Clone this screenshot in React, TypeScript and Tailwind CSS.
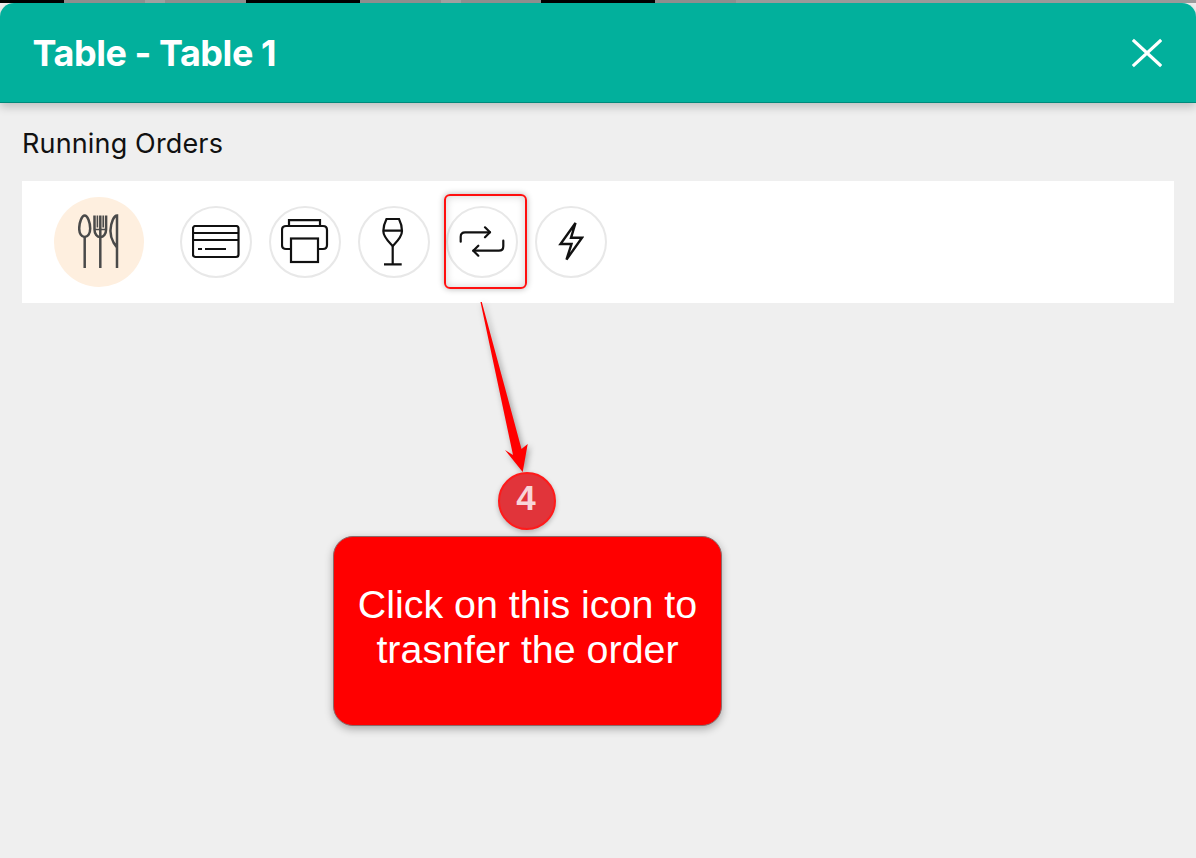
function IconCircle({ children }: { children: React.ReactNode }) {
  return (
    <div className="w-[72px] h-[72px] rounded-full border-2 border-[#e8e8e8] bg-white flex items-center justify-center shrink-0">
      {children}
    </div>
  );
}

function CutleryIcon() {
  return (
    <svg width="42" height="56" viewBox="0 0 42 56" fill="none" stroke="#4a4a4a" strokeWidth="2.500">
      <path d="M6.700 1.500c-2.800 0-5.500 7-5.500 13 0 5 2.300 8.500 5.500 8.500s5.500-3.500 5.500-8.500c0-6-2.700-13-5.500-13z" />
      <path d="M6.700 23v31" />
      <path d="M16.500 1.500v14c0 4.500 2.600 7.500 5.800 7.500s5.800-3 5.800-7.500v-14" />
      <path d="M22.300 1.500V54" />
      <path d="M19.400 1.500v12M25.200 1.500v12M16.500 15.500h11.600" strokeWidth="1.600" />
      <path d="M39 54V1.500c-3 0-6 6.500-6.500 14.500-.3 5 1 9 3 12.500l3.500 5" />
    </svg>
  );
}

function CardIcon() {
  return (
    <svg width="48" height="34" viewBox="0 0 48 34" fill="none" stroke="#111" strokeWidth="2.200">
      <rect x="1" y="1" width="45.500" height="31" rx="2.500" />
      <path d="M1 8h45.500M1 15h45.500M6 24h4M13 24h21" strokeWidth="1.800" />
    </svg>
  );
}

function PrinterIcon() {
  return (
    <svg width="48" height="46" viewBox="0 0 48 46" fill="none" stroke="#111" strokeWidth="2.200">
      <path d="M8 7V1.200h31V7" />
      <path d="M10 30H5c-2.500 0-4-1.500-4-4V11c0-2.500 1.500-4 4-4h37c2.500 0 4 1.500 4 4v15c0 2.500-1.500 4-4 4h-5" />
      <rect x="10" y="19.500" width="27" height="23.500" />
    </svg>
  );
}

function WineIcon() {
  return (
    <svg width="24" height="48" viewBox="0 0 24 48" fill="none" stroke="#111" strokeWidth="2.200">
      <path d="M4.500 1h12.500c2 4 3 8 3 12 0 6-5 10.500-9.300 15C6.500 23.500 1.300 19 1.300 13c0-4 1.200-8 3.200-12z" />
      <path d="M1.500 12.700h18.500M10.700 28v18.300M2 46.300h17.700" />
    </svg>
  );
}

function TransferIcon() {
  return (
    <svg width="46" height="32" viewBox="0 0 46 32" fill="none" stroke="#111" strokeWidth="2.200" strokeLinecap="round" strokeLinejoin="round">
      <path d="M1.700 15.700v-5c0-3 1.400-4.400 4.400-4.400H31" />
      <path d="M26 1.300l5 5-5 5" />
      <path d="M44.300 14.700v5.600c0 3-1.400 4.400-4.400 4.400H14.300" />
      <path d="M19.300 19.700l-5 5 5 5" />
    </svg>
  );
}

function BoltIcon() {
  return (
    <svg width="26" height="44" viewBox="0 0 26 44" fill="none" stroke="#111" strokeWidth="2.400" strokeLinejoin="miter">
      <path d="M17.500 3L2.500 24H13.500L8.500 39.500 24 17.800H13z" />
    </svg>
  );
}

// strip of the page showing above the modal: [width, colour class]
const stripParts: [string, string][] = [
  ['w-[64px]', 'bg-black'],
  ['w-[81px]', 'bg-[#8e8e8e]'],
  ['w-[20px]', 'bg-[#a0a0a0]'],
  ['w-[81px]', 'bg-[#8e8e8e]'],
  ['w-[114px]', 'bg-black'],
  ['w-[81px]', 'bg-[#8e8e8e]'],
  ['w-[20px]', 'bg-[#a0a0a0]'],
  ['w-[80px]', 'bg-[#8e8e8e]'],
  ['w-[114px]', 'bg-black'],
  ['w-[81px]', 'bg-[#8e8e8e]'],
  ['flex-1', 'bg-[#9a9a9a]'],
];

export default function App() {
  return (
    <div className="relative h-[858px] w-[1196px] overflow-hidden bg-[#efefef] font-['Inter','Liberation_Sans',sans-serif]">
      <div className="h-[3px] flex">
        {stripParts.map(([w, bg], i) => (
          <div key={i} className={`${w} ${bg}`} />
        ))}
      </div>

      <header className="h-[100px] bg-[#02b09c] rounded-t-[14px] border-b border-[#00897b] shadow-[0_4px_10px_rgba(0,0,0,0.2)] flex items-center justify-between pl-[32.5px] pr-[34px]">
        <h1 className="text-[36px] font-bold text-white tracking-[-0.45px]">Table - Table 1</h1>
        <svg width="30" height="30" viewBox="0 0 30 30" stroke="#fff" strokeWidth="3.200" strokeLinecap="square">
          <path d="M2 3l26 24M28 3L2 27" />
        </svg>
      </header>

      <div className="px-[22px]">
        <p className="pt-[25px] text-[27px] leading-[31px] tracking-[0.15px] text-[#111]">Running Orders</p>

        <div className="mt-[22px] h-[122px] bg-white flex items-center pl-[32px]">
          <div className="w-[90px] h-[90px] rounded-full bg-[#feefdf] flex items-center justify-center shrink-0">
            <CutleryIcon />
          </div>
          <div className="ml-[36.4px] flex items-center gap-[16.7px]">
            <IconCircle><CardIcon /></IconCircle>
            <IconCircle><PrinterIcon /></IconCircle>
            <IconCircle><WineIcon /></IconCircle>
            <IconCircle><TransferIcon /></IconCircle>
            <IconCircle><BoltIcon /></IconCircle>
          </div>
        </div>
      </div>

      {/* tutorial overlay */}
      <div className="absolute left-[444px] top-[194px] w-[83px] h-[95px] rounded-[6px] border-2 border-[#ff0f0f] shadow-[0_0_6px_rgba(0,0,0,0.3),inset_0_0_8px_rgba(0,0,0,0.18)]" />

      <svg className="absolute left-[470px] top-[295px] drop-shadow-[2px_2px_3px_rgba(0,0,0,0.35)]" width="70" height="185" viewBox="0 0 70 185" fill="none">
        <polygon points="10.500,7 11.800,7 51.500,154 57.700,149 52.700,177 35,155 43,160" fill="#ff0000" />
      </svg>

      <div className="absolute left-[498px] top-[472px] w-[58px] h-[58px] rounded-full bg-[#e1343a] border-2 border-[#ff1a1a] shadow-[0_2px_5px_rgba(0,0,0,0.25)] flex items-center justify-center pb-[5px] pr-[2px] text-[35px] font-bold text-[#f8d5d8] font-['Liberation_Sans',sans-serif]">
        4
      </div>

      <div className="absolute left-[333px] top-[536px] w-[389px] h-[190px] rounded-[20px] bg-[#ff0000] border border-[#8c6a6a] shadow-[0_3px_8px_rgba(0,0,0,0.3)] flex items-center justify-center pb-[8px] text-center text-white text-[39.4px] leading-[45px] font-['Liberation_Sans',sans-serif]">
        <span>Click on this icon to<br />trasnfer the order</span>
      </div>
    </div>
  );
}
